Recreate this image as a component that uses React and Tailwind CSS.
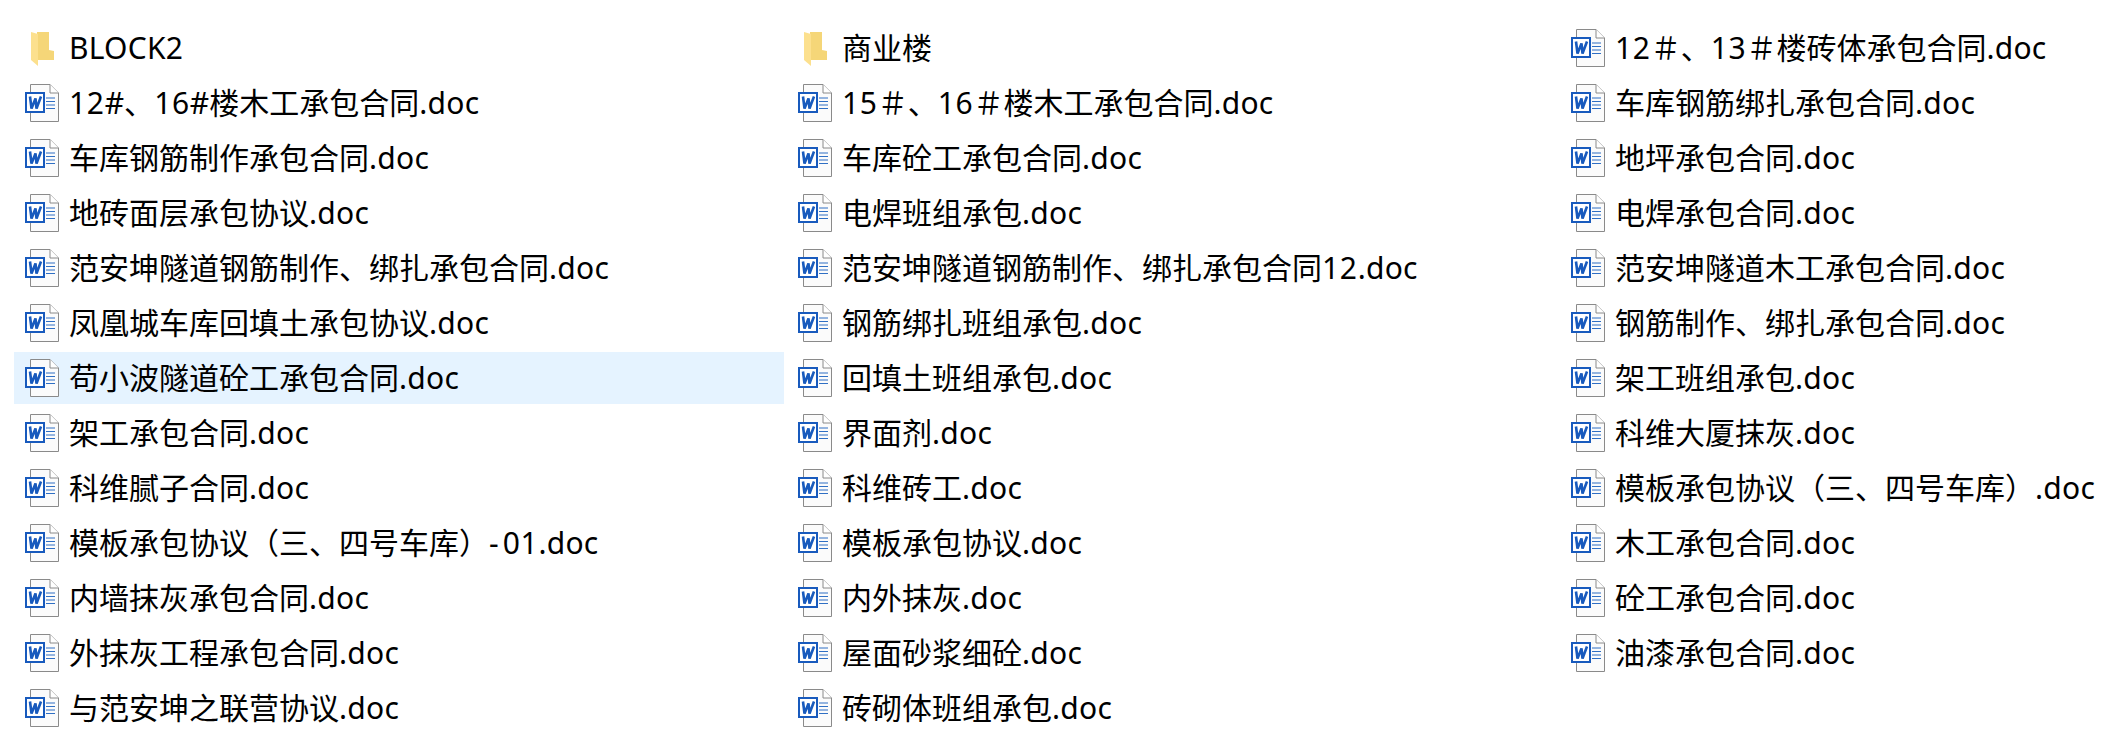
import React from "react";

const columns = [
  [
    { name: "BLOCK2", folder: true },
    "12#、16#楼木工承包合同.doc",
    "车库钢筋制作承包合同.doc",
    "地砖面层承包协议.doc",
    "范安坤隧道钢筋制作、绑扎承包合同.doc",
    "凤凰城车库回填土承包协议.doc",
    { name: "苟小波隧道砼工承包合同.doc", hover: true },
    "架工承包合同.doc",
    "科维腻子合同.doc",
    "模板承包协议（三、四号车库）-01.doc",
    "内墙抹灰承包合同.doc",
    "外抹灰工程承包合同.doc",
    "与范安坤之联营协议.doc",
  ],
  [
    { name: "商业楼", folder: true },
    "15＃、16＃楼木工承包合同.doc",
    "车库砼工承包合同.doc",
    "电焊班组承包.doc",
    "范安坤隧道钢筋制作、绑扎承包合同12.doc",
    "钢筋绑扎班组承包.doc",
    "回填土班组承包.doc",
    "界面剂.doc",
    "科维砖工.doc",
    "模板承包协议.doc",
    "内外抹灰.doc",
    "屋面砂浆细砼.doc",
    "砖砌体班组承包.doc",
  ],
  [
    "12＃、13＃楼砖体承包合同.doc",
    "车库钢筋绑扎承包合同.doc",
    "地坪承包合同.doc",
    "电焊承包合同.doc",
    "范安坤隧道木工承包合同.doc",
    "钢筋制作、绑扎承包合同.doc",
    "架工班组承包.doc",
    "科维大厦抹灰.doc",
    "模板承包协议（三、四号车库）.doc",
    "木工承包合同.doc",
    "砼工承包合同.doc",
    "油漆承包合同.doc",
  ],
];

const FolderIcon = () => (
  <svg width="34" height="38" viewBox="0 0 34 38" className="mt-[2px] shrink-0">
    <path d="M6 3H24V21L29 22V31H12V3Z" fill="#f5d678" />
    <path d="M6 3L13 5V37L6 31Z" fill="#fce08e" />
  </svg>
);

const WordIcon = () => (
  <svg width="34" height="38" viewBox="0 0 34 38" className="mt-[2px] shrink-0">
    <path d="M5.5 .5H25L33.5 9V37.5H5.5Z" fill="#fbfbfb" stroke="#8a8a8a" />
    <path d="M25 .5V9H33.5" fill="#fff" stroke="#8a8a8a" />
    <path d="M21 14H30M21 17.5H30M21 21H30M21 24.5H30" stroke="#2f6fc4" strokeWidth="1" />
    <rect x="1" y="9" width="18" height="19" fill="#fff" stroke="#185abd" strokeWidth="2" />
    <polyline points="5,12.5 6.5,24.5 10.5,14.5 11.5,24.5 16,12.5" fill="none" stroke="#185abd" strokeWidth="2.6" />
  </svg>
);

// the reference's latin glyphs run a little wider than Noto Sans
const FileName = ({ name }) =>
  name.split(/(\d+|-|\.doc|BLOCK)/).map((part, i) => {
    if (/^\d+$/.test(part)) return <span key={i} className="tracking-[0.7px]">{part}</span>;
    if (part === "-") return <span key={i} className="tracking-[4px]">{part}</span>;
    if (part === ".doc" || part === "BLOCK") return <span key={i} className="tracking-[0.25px]">{part}</span>;
    return part;
  });

const Row = ({ item }) => {
  const entry = typeof item === "string" ? { name: item } : item;
  return (
    <div className={`flex h-[52px] w-[770px] items-center gap-[10px] pb-[2px] pl-[11px] ${entry.hover ? "bg-[#e5f3ff]" : ""}`}>
      {entry.folder ? <FolderIcon /> : <WordIcon />}
      <span className="whitespace-nowrap">
        <FileName name={entry.name} />
      </span>
    </div>
  );
};

export default function App() {
  return (
    <div className="flex h-[748px] w-[2116px] overflow-hidden bg-white pl-[14px] pt-[22px] font-['Noto_Sans','Noto_Sans_CJK_SC',sans-serif] text-[30px] text-black">
      {columns.map((col, i) => (
        <div key={i} className="flex w-[773px] shrink-0 flex-col gap-[3px]">
          {col.map((item, j) => (
            <Row key={j} item={item} />
          ))}
        </div>
      ))}
    </div>
  );
}
